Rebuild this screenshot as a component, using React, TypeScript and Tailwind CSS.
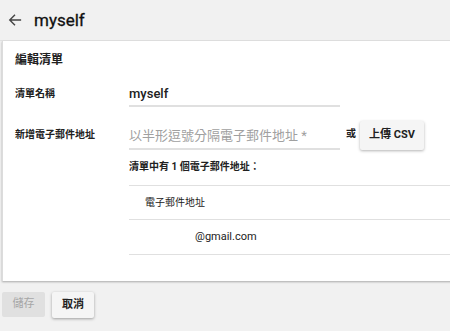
const font = { fontFamily: '"Roboto", "Noto Sans CJK TC", sans-serif' }

function BackArrow() {
	return (
		<svg width="14" height="14" viewBox="0 0 16 16" className="text-[#444]">
			<path d="M15 8H2.5M8 2L2 8l6 6" fill="none" stroke="currentColor" strokeWidth="1.6" />
		</svg>
	)
}

export default function App() {
	return (
		<div className="w-[450px] h-[331px] bg-[#f1f1f1] overflow-hidden text-[#212121]" style={font}>
			<div className="h-[41px] flex items-center pl-[8px] border-b border-[#e2e2e2]">
				<BackArrow />
				<span className="ml-[12px] text-[17px] text-[#111] leading-none [-webkit-text-stroke:0.3px_#111]">myself</span>
			</div>
			<div className="ml-[2px] w-[460px] h-[240px] bg-white border-l border-[#dcdcdc] shadow-[0_1px_2px_rgba(0,0,0,0.3)]">
				<div className="pl-[12px] pt-[11px] text-[12px] font-bold leading-[16px]">編輯清單</div>
				<div className="flex items-end mt-[17px] h-[22px]">
					<div className="w-[126px] pl-[12px] text-[10px] font-bold pb-[6px]">清單名稱</div>
					<div className="w-[211px] border-b-2 border-[#e0e0e0] text-[13px] font-medium pb-[3px] leading-[16px]">myself</div>
				</div>
				<div className="flex items-center mt-[14px]">
					<div className="w-[126px] pl-[12px] text-[10px] font-bold self-start pt-[6px]">新增電子郵件地址</div>
					<div className="w-[211px] border-b-2 border-[#e0e0e0] text-[13px] text-[#a0a0a0] pb-[4px] pt-[2px] leading-[16px] self-end">以半形逗號分隔電子郵件地址 *</div>
					<span className="ml-[6px] text-[10px] font-bold self-start pt-[5px]">或</span>
					<button className="ml-[4px] w-[64px] h-[29px] bg-[#f5f5f5] text-[11px] font-bold rounded-[2px] shadow-[0_1px_3px_rgba(0,0,0,0.3)]">上傳 CSV</button>
				</div>
				<div className="ml-[126px]">
					<div className="pt-[10px] text-[10px] font-bold leading-[14px]">清單中有 1 個電子郵件地址：</div>
					<div className="mt-[11px] border-t border-[#e0e0e0] h-[34px] flex items-center pl-[16px] text-[10px]">電子郵件地址</div>
					<div className="border-t border-[#e0e0e0] h-[35px] flex items-center pl-[66px] text-[11px]">@gmail.com</div>
					<div className="border-t border-[#e0e0e0]" />
				</div>
			</div>
			<div className="flex gap-[7px] ml-[2px] mt-[11px]">
				<button className="w-[43px] h-[25px] bg-[#e0e0e0] text-[#a6a6a6] text-[11px] rounded-[2px]">儲存</button>
				<button className="w-[42px] h-[26px] bg-[#f5f5f5] text-[11px] font-bold rounded-[2px] shadow-[0_1px_3px_rgba(0,0,0,0.35)]">取消</button>
			</div>
		</div>
	)
}
